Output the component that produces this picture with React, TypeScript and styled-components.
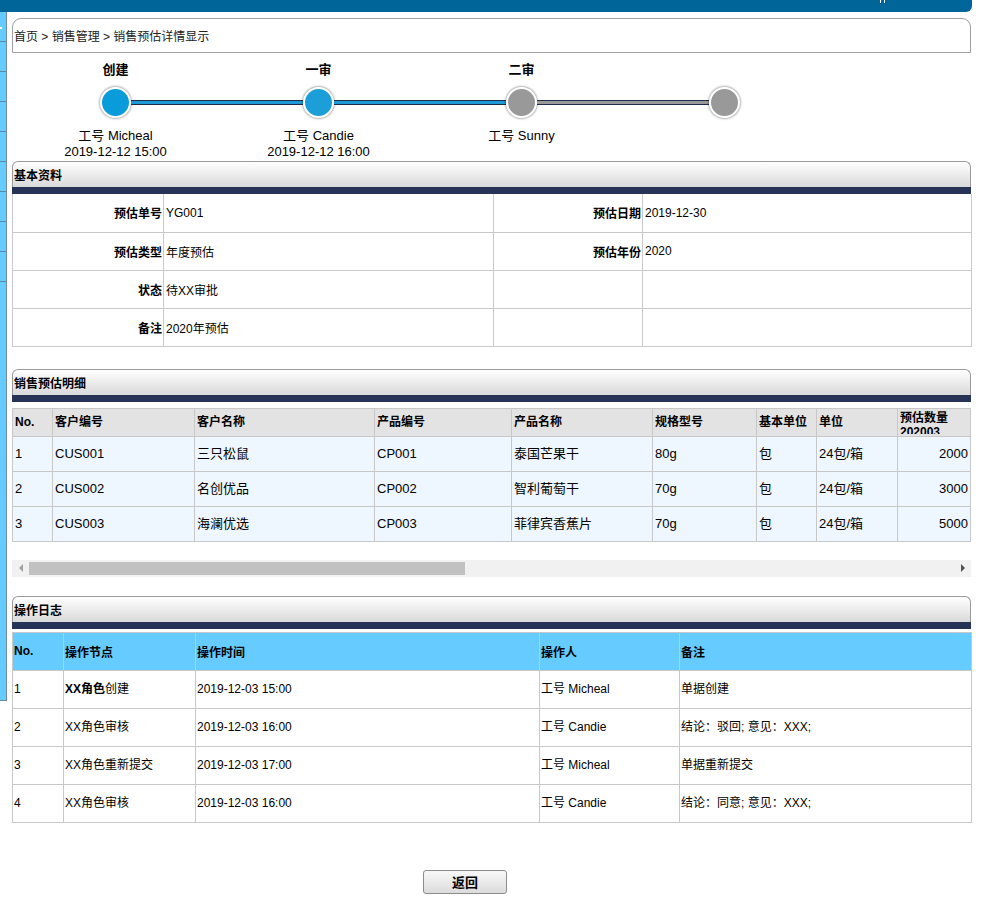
import * as React from "react";
import styled, { createGlobalStyle } from "styled-components";

const GlobalStyle = createGlobalStyle`
  html, body {
    margin: 0;
    padding: 0;
    background: #fff;
  }
  body {
    font-family: "Liberation Sans", Arial, "Noto Sans CJK SC", sans-serif;
    font-size: 12px;
    color: #000;
    overflow: hidden;
  }
`;

const Frame = styled.div`
  width: 972px;
`;

const TopBar = styled.div`
  height: 12px;
  background: #006699;
  border-bottom-right-radius: 6px;
  display: flex;
  justify-content: flex-end;
  padding-right: 87px;
`;

const TopMark = styled.span`
  width: 5px;
  height: 3px;
  box-sizing: border-box;
  border-left: 1px solid #fff;
  border-right: 1px solid #fff;
`;

const Body = styled.div`
  display: flex;
  align-items: flex-start;
`;

const Sidebar = styled.div`
  width: 6px;
  height: 688px;
  background: #66ccff;
  border-right: 1px solid #6f8a9c;
  border-bottom: 1px solid #6f8a9c;
  display: flex;
  flex-direction: column;
`;

const SideItem = styled.div`
  height: 30px;
  border-bottom: 1px solid #5c87a3;
  display: flex;
  align-items: center;
  padding-top: 2px;
  box-sizing: border-box;
`;

const SideDot = styled.span`
  width: 2px;
  height: 2px;
  background: #fff;
`;

const Main = styled.div`
  width: 959px;
  margin-left: 5px;
`;

const Breadcrumb = styled.div`
  margin-top: 6px;
  height: 35px;
  box-sizing: border-box;
  border: 1px solid #a0a0a0;
  border-radius: 9px 9px 0 0;
  display: flex;
  align-items: center;
  padding-left: 1px;
  font-size: 12px;
  color: #222;
`;

/* ---- progress ---- */

const Steps = styled.div`
  display: grid;
  grid-template-columns: repeat(4, 203px);
  padding-left: 2px;
  height: 108px;
  box-sizing: border-box;
`;

const Step = styled.div`
  display: flex;
  flex-direction: column;
  align-items: center;
  padding-top: 9px;
`;

const StepTitle = styled.div`
  height: 16px;
  line-height: 16px;
  font-size: 13px;
  font-weight: bold;
`;

const Track = styled.div`
  align-self: stretch;
  display: flex;
  align-items: center;
  height: 31px;
  margin-top: 9px;
`;

const Half = styled.div<{ $color?: string }>`
  flex: 1;
  height: 3px;
  background: ${(p) => p.$color || "transparent"};
  border-top: 1px solid ${(p) => (p.$color ? "#1d2d4d" : "transparent")};
  border-bottom: 1px solid ${(p) => (p.$color ? "#1d2d4d" : "transparent")};
`;

const Dot = styled.div<{ $color: string }>`
  width: 31px;
  height: 31px;
  box-sizing: border-box;
  border: 2px solid #fff;
  border-radius: 50%;
  background: ${(p) => p.$color};
  box-shadow: 0 0 2px 1px rgba(0, 0, 0, 0.3);
`;

const StepName = styled.div`
  margin-top: 10px;
  line-height: 16px;
  font-size: 13px;
`;

const StepTime = styled.div`
  line-height: 15px;
  font-size: 13px;
`;

/* ---- sections ---- */

const SectionHead = styled.div<{ $gap?: number }>`
  margin-top: ${(p) => p.$gap || 0}px;
  height: 26px;
  box-sizing: border-box;
  border: 1px solid #9a9a9a;
  border-bottom: none;
  border-radius: 6px 6px 0 0;
  background: linear-gradient(#ffffff, #d9d9d9);
  display: flex;
  align-items: center;
  padding-left: 1px;
  font-size: 12px;
  font-weight: bold;
`;

const SectionBar = styled.div`
  height: 7px;
  background: #263356;
`;

const Col = styled.col<{ $w: number }>`
  width: ${(p) => p.$w}px;
`;

const InfoTable = styled.table`
  width: 100%;
  border-collapse: collapse;
  table-layout: fixed;
  margin-bottom: 22px;

  tr {
    height: 38px;
  }
  tr:first-child td {
    border-top: none;
  }
`;

const InfoCell = styled.td<{ $label?: boolean }>`
  border: 1px solid #cacaca;
  padding: 0 ${(p) => (p.$label ? "1px 0 0" : "0 0 2px")};
  text-align: ${(p) => (p.$label ? "right" : "left")};
  font-weight: ${(p) => (p.$label ? "bold" : "normal")};
  font-size: 12px;
  vertical-align: middle;
`;

const DetailScroll = styled.div`
  margin-top: 6px;
  width: 959px;
  overflow: hidden;
`;

const DetailTable = styled.table<{ $w: number }>`
  width: ${(p) => p.$w}px;
  border-collapse: collapse;
  table-layout: fixed;
`;

const DetailHead = styled.th`
  height: 27px;
  padding: 0 2px;
  background: #e3e3e3;
  border: 1px solid #c8c8c8;
  text-align: left;
  font-size: 12px;
  font-weight: bold;
  vertical-align: middle;
`;

const HeadClip = styled.div`
  max-height: 23px;
  line-height: 14px;
  overflow: hidden;
`;

const DetailCell = styled.td<{ $num?: boolean }>`
  height: 34px;
  padding: 0 ${(p) => (p.$num ? "2px 0 0" : "0 0 2px")};
  background: #eef6ff;
  border: 1px solid #c8c8c8;
  font-size: 13px;
  line-height: 16px;
  text-align: ${(p) => (p.$num ? "right" : "left")};
  vertical-align: middle;
  white-space: nowrap;
  overflow: hidden;
`;

const Scrollbar = styled.div`
  margin-top: 18px;
  height: 17px;
  background: #f1f1f1;
  display: flex;
  align-items: center;
`;

const ScrollArrow = styled.div`
  width: 17px;
  height: 17px;
  display: flex;
  align-items: center;
  justify-content: center;
`;

const ArrowLeft = styled.span`
  width: 0;
  height: 0;
  border-top: 4px solid transparent;
  border-bottom: 4px solid transparent;
  border-right: 4px solid #a3a3a3;
`;

const ArrowRight = styled.span`
  width: 0;
  height: 0;
  border-top: 4px solid transparent;
  border-bottom: 4px solid transparent;
  border-left: 4px solid #505050;
`;

const ScrollTrack = styled.div`
  flex: 1;
  height: 17px;
  display: flex;
  align-items: center;
`;

const ScrollThumb = styled.div`
  height: 13px;
  background: #c1c1c1;
`;

const LogTable = styled.table`
  margin-top: 3px;
  width: 100%;
  border-collapse: collapse;
  table-layout: fixed;
`;

const LogHead = styled.th`
  height: 37px;
  padding: 0 1px;
  background: #66ccff;
  border: 1px solid #c8c8c8;
  text-align: left;
  font-size: 12px;
  font-weight: bold;
  vertical-align: middle;
`;

const LogCell = styled.td`
  height: 37px;
  padding: 0 1px;
  border: 1px solid #c8c8c8;
  font-size: 12px;
  line-height: 16px;
  vertical-align: middle;
`;

const ButtonRow = styled.div`
  margin-top: 47px;
  padding-left: 411px;
`;

const Button = styled.button`
  width: 84px;
  height: 24px;
  border: 1px solid #8c8c8c;
  border-radius: 3px;
  background: linear-gradient(#f8f8f8, #dcdcdc);
  font-family: inherit;
  font-size: 13px;
  font-weight: bold;
  color: #000;
  padding: 0;
`;

/* ---- data ---- */

const steps = [
  { title: "创建", name: "工号 Micheal", time: "2019-12-12 15:00", color: "#0a9bdb", left: "", right: "#1b9ad6" },
  { title: "一审", name: "工号 Candie", time: "2019-12-12 16:00", color: "#1c9fd9", left: "#1b9ad6", right: "#1b9ad6" },
  { title: "二审", name: "工号 Sunny", time: "", color: "#999999", left: "#1b9ad6", right: "#999999" },
  { title: "", name: "", time: "", color: "#999999", left: "#999999", right: "" },
];

// columns past the visible edge of the scroller stay blank
const detailCols = [
  { title: "No.", w: 40 },
  { title: "客户编号", w: 142 },
  { title: "客户名称", w: 180 },
  { title: "产品编号", w: 137 },
  { title: "产品名称", w: 141 },
  { title: "规格型号", w: 104 },
  { title: "基本单位", w: 60 },
  { title: "单位", w: 81 },
  { title: "预估数量 202003", w: 73 },
  ...Array.from({ length: 9 }).map(() => ({ title: "", w: 73 })),
  { title: "", w: 420 },
];

const detailRows = [
  ["1", "CUS001", "三只松鼠", "CP001", "泰国芒果干", "80g", "包", "24包/箱", "2000"],
  ["2", "CUS002", "名创优品", "CP002", "智利葡萄干", "70g", "包", "24包/箱", "3000"],
  ["3", "CUS003", "海澜优选", "CP003", "菲律宾香蕉片", "70g", "包", "24包/箱", "5000"],
];

const logs: [string, React.ReactNode, string, string, string][] = [
  ["1", <><b>XX角色</b>创建</>, "2019-12-03 15:00", "工号 Micheal", "单据创建"],
  ["2", "XX角色审核", "2019-12-03 16:00", "工号 Candie", "结论：驳回; 意见：XXX;"],
  ["3", "XX角色重新提交", "2019-12-03 17:00", "工号 Micheal", "单据重新提交"],
  ["4", "XX角色审核", "2019-12-03 16:00", "工号 Candie", "结论：同意; 意见：XXX;"],
];

const VISIBLE = 959;
const TRACK = VISIBLE - 34;

export default function App() {
  const tableWidth = detailCols.reduce((s, c) => s + c.w, 0);
  const thumb = Math.round((VISIBLE / tableWidth) * TRACK);

  return (
    <Frame>
      <GlobalStyle />
      <TopBar>
        <TopMark />
      </TopBar>
      <Body>
        <Sidebar>
          {Array.from({ length: 9 }).map((_, i) => (
            <SideItem key={i}>{i === 0 && <SideDot />}</SideItem>
          ))}
        </Sidebar>
        <Main>
          <Breadcrumb>首页 &gt; 销售管理 &gt; 销售预估详情显示</Breadcrumb>

          <Steps>
            {steps.map((s, i) => (
              <Step key={i}>
                <StepTitle>{s.title}</StepTitle>
                <Track>
                  <Half $color={s.left} />
                  <Dot $color={s.color} />
                  <Half $color={s.right} />
                </Track>
                <StepName>{s.name}</StepName>
                <StepTime>{s.time}</StepTime>
              </Step>
            ))}
          </Steps>

          <SectionHead>基本资料</SectionHead>
          <SectionBar />
          <InfoTable>
            <colgroup>
              <Col $w={151} />
              <Col $w={330} />
              <Col $w={149} />
              <Col $w={329} />
            </colgroup>
            <tbody>
              <tr>
                <InfoCell $label>预估单号</InfoCell>
                <InfoCell>YG001</InfoCell>
                <InfoCell $label>预估日期</InfoCell>
                <InfoCell>2019-12-30</InfoCell>
              </tr>
              <tr>
                <InfoCell $label>预估类型</InfoCell>
                <InfoCell>年度预估</InfoCell>
                <InfoCell $label>预估年份</InfoCell>
                <InfoCell>2020</InfoCell>
              </tr>
              <tr>
                <InfoCell $label>状态</InfoCell>
                <InfoCell>待XX审批</InfoCell>
                <InfoCell $label />
                <InfoCell />
              </tr>
              <tr>
                <InfoCell $label>备注</InfoCell>
                <InfoCell>2020年预估</InfoCell>
                <InfoCell $label />
                <InfoCell />
              </tr>
            </tbody>
          </InfoTable>

          <SectionHead>销售预估明细</SectionHead>
          <SectionBar />
          <DetailScroll>
            <DetailTable $w={tableWidth}>
              <colgroup>
                {detailCols.map((c, i) => (
                  <Col key={i} $w={c.w} />
                ))}
              </colgroup>
              <thead>
                <tr>
                  {detailCols.map((c, i) => (
                    <DetailHead key={i}>
                      <HeadClip>{c.title}</HeadClip>
                    </DetailHead>
                  ))}
                </tr>
              </thead>
              <tbody>
                {detailRows.map((r) => (
                  <tr key={r[0]}>
                    {detailCols.map((_, i) => (
                      <DetailCell key={i} $num={i === 8}>
                        {r[i] || ""}
                      </DetailCell>
                    ))}
                  </tr>
                ))}
              </tbody>
            </DetailTable>
          </DetailScroll>
          <Scrollbar>
            <ScrollArrow>
              <ArrowLeft />
            </ScrollArrow>
            <ScrollTrack>
              <ScrollThumb style={{ width: thumb }} />
            </ScrollTrack>
            <ScrollArrow>
              <ArrowRight />
            </ScrollArrow>
          </Scrollbar>

          <SectionHead $gap={19}>操作日志</SectionHead>
          <SectionBar />
          <LogTable>
            <colgroup>
              <Col $w={51} />
              <Col $w={132} />
              <Col $w={344} />
              <Col $w={140} />
              <Col $w={292} />
            </colgroup>
            <thead>
              <tr>
                <LogHead>No.</LogHead>
                <LogHead>操作节点</LogHead>
                <LogHead>操作时间</LogHead>
                <LogHead>操作人</LogHead>
                <LogHead>备注</LogHead>
              </tr>
            </thead>
            <tbody>
              {logs.map((l) => (
                <tr key={l[0]}>
                  {l.map((v, i) => (
                    <LogCell key={i}>{v}</LogCell>
                  ))}
                </tr>
              ))}
            </tbody>
          </LogTable>

          <ButtonRow>
            <Button type="button">返回</Button>
          </ButtonRow>
        </Main>
      </Body>
    </Frame>
  );
}
